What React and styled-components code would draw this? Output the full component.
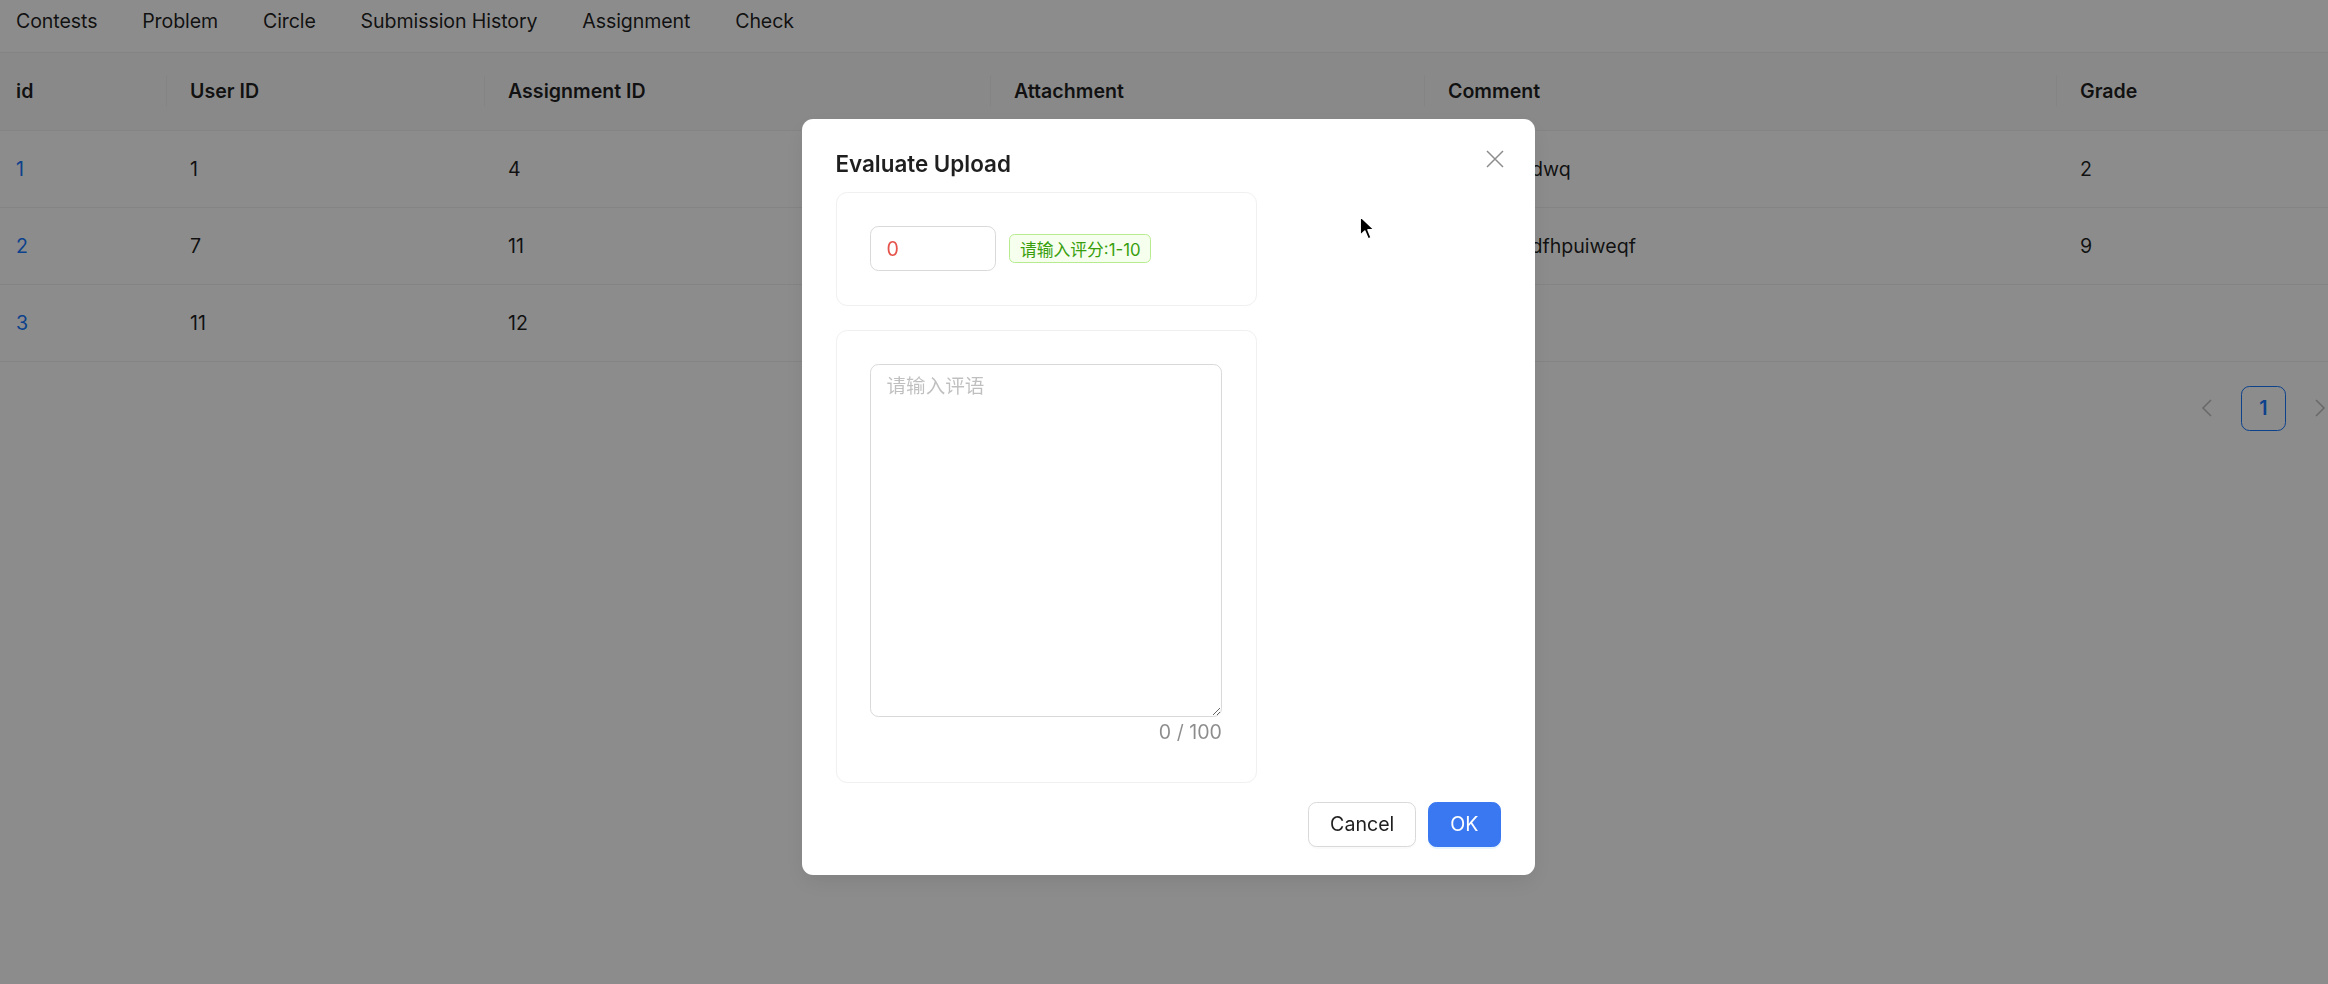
import React from 'react';
import styled, { createGlobalStyle } from 'styled-components';

const GlobalStyle = createGlobalStyle`
  html, body {
    margin: 0;
    padding: 0;
    overflow: hidden;
    background: #ffffff;
  }
  body {
    font-family: Inter, "Noto Sans CJK SC", sans-serif;
    font-size: 19.6px;
    color: rgba(0, 0, 0, 0.88);
  }
  * {
    box-sizing: border-box;
  }
`;

const Page = styled.div`
  width: 2342px;
  height: 984px;
  background: #ffffff;
`;

const Nav = styled.nav`
  display: flex;
  align-items: flex-start;
  gap: 44.8px;
  height: 53px;
  padding: 6px 0 0 16px;
  border-bottom: 1px solid #f0f0f0;
`;

const NavItem = styled.span`
  line-height: 30.8px;
  white-space: nowrap;
  letter-spacing: -0.1px;
`;

const Table = styled.table`
  width: 100%;
  border-collapse: collapse;
  table-layout: fixed;
`;

const Th = styled.th`
  position: relative;
  height: 77px;
  padding: 0 ${p => (p.$first ? '16px' : '24px')};
  text-align: left;
  font-weight: 600;
  line-height: 30.8px;
  background: #fafafa;
  border-bottom: 1px solid #f0f0f0;
  &::before {
    content: ${p => (p.$first ? 'none' : "''")};
    position: absolute;
    left: 0;
    top: 50%;
    width: 1px;
    height: 31px;
    transform: translateY(-50%);
    background: #f0f0f0;
  }
`;

const Td = styled.td`
  height: 77px;
  padding: 2px ${p => (p.$first ? '16px' : '24px')} 0;
  line-height: 30.8px;
  border-bottom: 1px solid #f0f0f0;
  white-space: nowrap;
  overflow: hidden;
  color: ${p => (p.$link ? '#1677ff' : 'rgba(0, 0, 0, 0.88)')};
`;

const Pagination = styled.div`
  display: flex;
  justify-content: flex-end;
  gap: 11.2px;
  margin-top: 24px;
`;

const PageArrow = styled.span`
  display: flex;
  align-items: center;
  justify-content: center;
  width: 45px;
  height: 45px;
  color: rgba(0, 0, 0, 0.25);
`;

const PageItem = styled.span`
  display: flex;
  align-items: center;
  justify-content: center;
  width: 45px;
  height: 45px;
  border: 1px solid #1677ff;
  border-radius: 8.4px;
  font-weight: 600;
  color: #1677ff;
`;

const Mask = styled.div`
  position: fixed;
  inset: 0;
  background: rgba(0, 0, 0, 0.45);
`;

const ModalWrap = styled.div`
  position: fixed;
  inset: 0;
  display: flex;
  justify-content: center;
  align-items: flex-start;
  padding: 119px 0 0 8px;
`;

const Modal = styled.div`
  position: relative;
  width: 733px;
  padding: 28px 34px;
  background: #ffffff;
  border-radius: 11.2px;
  box-shadow: 0 8px 22px rgba(0, 0, 0, 0.08);
`;

const CloseButton = styled.button`
  position: absolute;
  top: 24px;
  right: 24px;
  width: 31px;
  height: 31px;
  display: flex;
  align-items: center;
  justify-content: center;
  padding: 0;
  border: none;
  background: transparent;
  color: rgba(0, 0, 0, 0.45);
`;

const Title = styled.div`
  font-size: 22.4px;
  font-weight: 600;
  line-height: 33.6px;
  margin-bottom: 11.2px;
`;

const Card = styled.div`
  width: 421px;
  padding: 33.6px;
  border: 1px solid #f0f0f0;
  border-radius: 11.2px;
  margin-top: ${p => p.$gap || '0px'};
`;

const Row = styled.div`
  display: flex;
  align-items: center;
  gap: 13px;
`;

const ScoreInput = styled.input`
  width: 126px;
  height: 44.8px;
  padding: 0 15.4px;
  border: 1px solid #d9d9d9;
  border-radius: 8.4px;
  font: inherit;
  color: #e5534b;
  outline: none;
`;

const Tag = styled.span`
  display: inline-flex;
  align-items: center;
  height: 29px;
  padding: 0 9.8px;
  font-size: 16.8px;
  color: #389e0d;
  background: #f6ffed;
  border: 1px solid #b7eb8f;
  border-radius: 5.6px;
  white-space: nowrap;
`;

const TextArea = styled.textarea`
  display: block;
  width: 100%;
  height: 353px;
  padding: 5.6px 15.4px;
  border: 1px solid #d9d9d9;
  border-radius: 8.4px;
  font: inherit;
  line-height: 30.8px;
  color: rgba(0, 0, 0, 0.88);
  resize: vertical;
  outline: none;
  &::placeholder {
    color: rgba(0, 0, 0, 0.25);
  }
`;

const Count = styled.div`
  text-align: right;
  line-height: 30.8px;
  color: rgba(0, 0, 0, 0.45);
`;

const Footer = styled.div`
  display: flex;
  justify-content: flex-end;
  gap: 12px;
  margin-top: 19px;
`;

const Button = styled.button`
  height: 44.8px;
  padding: 0 21px;
  font: inherit;
  border-radius: 8.4px;
  border: 1px solid ${p => (p.$primary ? '#3a78f2' : '#d9d9d9')};
  background: ${p => (p.$primary ? '#3a78f2' : '#ffffff')};
  color: ${p => (p.$primary ? '#ffffff' : 'rgba(0, 0, 0, 0.88)')};
  box-shadow: ${p => (p.$primary ? '0 2px 0 rgba(5, 145, 255, 0.1)' : '0 2px 0 rgba(0, 0, 0, 0.02)')};
`;

const Cursor = styled.svg`
  position: fixed;
  left: 1359px;
  top: 215px;
`;

const columns = [
  { title: 'id', width: 166 },
  { title: 'User ID', width: 318 },
  { title: 'Assignment ID', width: 506 },
  { title: 'Attachment', width: 434 },
  { title: 'Comment', width: 632 },
  { title: 'Grade' },
];

const rows = [
  { id: 1, user: 1, assignment: 4, attachment: '', comment: 'wdwqdwdwq', grade: 2 },
  { id: 2, user: 7, assignment: 11, attachment: '', comment: 'swesrwedfhpuiweqf', grade: 9 },
  { id: 3, user: 11, assignment: 12, attachment: '', comment: '', grade: '' },
];

const navItems = ['Contests', 'Problem', 'Circle', 'Submission History', 'Assignment', 'Check'];

const Chevron = ({ dir }) => (
  <svg width="12" height="18" viewBox="0 0 12 18">
    <polyline
      points={dir === 'left' ? '10,1 2,9 10,17' : '2,1 10,9 2,17'}
      fill="none"
      stroke="currentColor"
      strokeWidth="1.6"
    />
  </svg>
);

const App = () => {
  return (
    <>
      <GlobalStyle />
      <Page>
        <Nav>
          {navItems.map(item => (
            <NavItem key={item}>{item}</NavItem>
          ))}
        </Nav>
        <Table>
          <colgroup>
            {columns.map(col => (
              <col key={col.title} style={col.width ? { width: col.width } : undefined} />
            ))}
          </colgroup>
          <thead>
            <tr>
              {columns.map((col, i) => (
                <Th key={col.title} $first={i === 0}>
                  {col.title}
                </Th>
              ))}
            </tr>
          </thead>
          <tbody>
            {rows.map(row => (
              <tr key={row.id}>
                <Td $first $link>
                  {row.id}
                </Td>
                <Td>{row.user}</Td>
                <Td>{row.assignment}</Td>
                <Td>{row.attachment}</Td>
                <Td>{row.comment}</Td>
                <Td>{row.grade}</Td>
              </tr>
            ))}
          </tbody>
        </Table>
        <Pagination>
          <PageArrow>
            <Chevron dir="left" />
          </PageArrow>
          <PageItem>1</PageItem>
          <PageArrow>
            <Chevron dir="right" />
          </PageArrow>
        </Pagination>
      </Page>

      <Mask />
      <ModalWrap>
        <Modal>
          <CloseButton aria-label="Close">
            <svg width="18" height="18" viewBox="0 0 18 18">
              <path d="M1 1 L17 17 M17 1 L1 17" stroke="currentColor" strokeWidth="1.5" />
            </svg>
          </CloseButton>
          <Title>Evaluate Upload</Title>
          <Card>
            <Row>
              <ScoreInput defaultValue="0" />
              <Tag>请输入评分:1-10</Tag>
            </Row>
          </Card>
          <Card $gap="24px">
            <TextArea placeholder="请输入评语" />
            <Count>0 / 100</Count>
          </Card>
          <Footer>
            <Button>Cancel</Button>
            <Button $primary>OK</Button>
          </Footer>
        </Modal>
      </ModalWrap>

      <Cursor width="17" height="26" viewBox="0 0 14 21">
        <path
          d="M1 1 L1 16.5 L4.8 13 L7.6 19.5 L10 18.4 L7.3 12 L12.5 12 Z"
          fill="#000000"
          stroke="#ffffff"
          strokeWidth="1.2"
          strokeLinejoin="round"
        />
      </Cursor>
    </>
  );
};

export default App;
